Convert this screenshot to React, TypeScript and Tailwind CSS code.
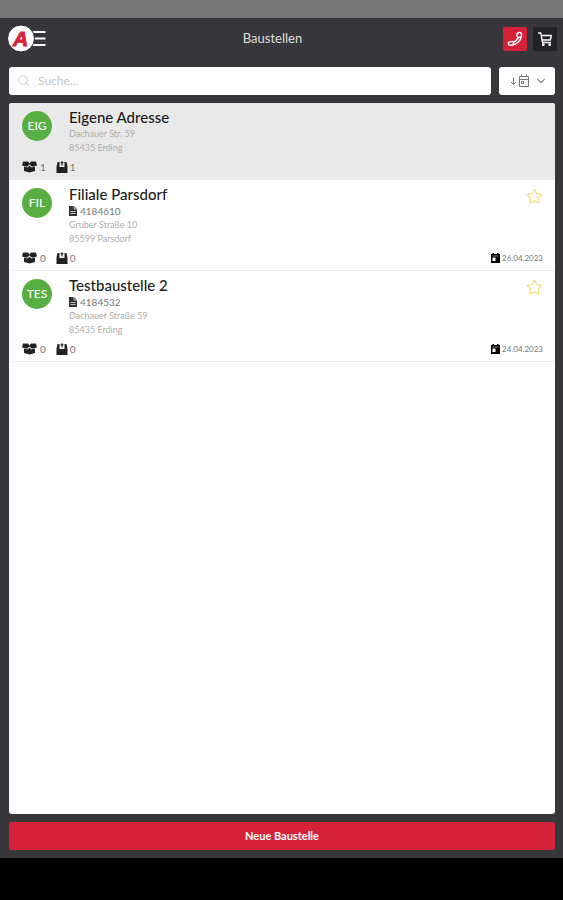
import React from "react";
import {IoChevronDown, IoSearchOutline} from "react-icons/io5";
import {Star} from "lucide-react";

type Site = {
    short: string;
    name: string;
    number?: string;
    street: string;
    city: string;
    orders: number;
    deliveries: number;
    date?: string;
};

const sites: Site[] = [
    {short: "EIG", name: "Eigene Adresse", street: "Dachauer Str. 59", city: "85435 Erding", orders: 1, deliveries: 1},
    {short: "FIL", name: "Filiale Parsdorf", number: "4184610", street: "Gruber Straße 10", city: "85599 Parsdorf", orders: 0, deliveries: 0, date: "26.04.2023"},
    {short: "TES", name: "Testbaustelle 2", number: "4184532", street: "Dachauer Straße 59", city: "85435 Erding", orders: 0, deliveries: 0, date: "24.04.2023"},
];

function PhoneIcon() {
    return (
        <svg viewBox="0 0 16 16" className="size-4" fill="none" stroke="currentColor" strokeWidth="1.4" strokeLinejoin="round" strokeLinecap="round" aria-hidden="true">
            <path d="M10.400 2.400Q12.500 0.700 14 2Q14.800 3 14.500 4.800C14 10 9.500 13.800 4 14.300Q2 14.400 1.500 13.200Q1.200 12 2 11.200L5.200 10.300 6.600 11.300C8.800 10.300 10.300 8.600 11.200 6.600L10.100 5.200Q9.600 3.400 10.400 2.400Z"/>
            <path d="M11.200 6.600 14 5.800M6.600 11.300 6.200 13.800"/>
        </svg>
    );
}

function CartIcon() {
    return (
        <svg viewBox="0 0 16 16" className="size-4" fill="none" stroke="currentColor" strokeWidth="1.4" strokeLinejoin="round" strokeLinecap="round" aria-hidden="true">
            <path d="M1.500 2H3.800L5.500 11.500H13.500M4.200 4.500H14.300L13.300 9H5"/>
            <circle cx="6.300" cy="13.700" r="0.700"/>
            <circle cx="12.700" cy="13.700" r="0.700"/>
        </svg>
    );
}

function BoxIcon() {
    return (
        <svg viewBox="0 0 15 12" className="h-3 w-[15px]" fill="currentColor" aria-hidden="true">
            <path d="M1 0.500H6L7.500 2.500 9 0.500H14L15 4.500 10 5.800 7.500 3.500 5 5.800 0 4.500Z"/>
            <path d="M2 5.500 5.500 6.500 7.500 4.700 9.500 6.500 13 5.500V10L7.500 11.500 2 10Z"/>
        </svg>
    );
}

function BasketIcon() {
    return (
        <svg viewBox="0 0 12 12" className="size-3" fill="currentColor" aria-hidden="true">
            <path d="M0.500 5.500 1.500 1H3.500V6H8.500V1H10.500L11.500 5.500V12H0.500Z"/>
            <path d="M6 0 8 2.200H6.600V4.500H5.400V2.200H4Z"/>
        </svg>
    );
}

function FileIcon() {
    return (
        <svg viewBox="0 0 8 10" className="h-[10px] w-2" aria-hidden="true">
            <path d="M0 0H5L8 3V10H0Z" fill="currentColor"/>
            <path d="M5 0V3H8M1.500 5.500H6.500M1.500 7.500H6.500" fill="none" stroke="white" strokeWidth="0.700"/>
        </svg>
    );
}

function DateIcon() {
    return (
        <svg viewBox="0 0 9 10" className="h-[10px] w-[9px]" aria-hidden="true">
            <path d="M0 1H1.500V0H3V1H6V0H7.500V1H9V10H0Z" fill="currentColor"/>
            <path d="M1.500 3H7.500" stroke="white" strokeWidth="0.500"/>
            <path d="M1.500 4.500H4.500V8H1.500Z" fill="white"/>
        </svg>
    );
}

function SortIcon() {
    return (
        <svg viewBox="0 0 20 14" className="h-[14px] w-5" fill="none" stroke="currentColor" aria-hidden="true">
            <path d="M3.500 3.500V10M1 8 3.500 10.500 6 8"/>
            <path d="M9.500 2.500H18.500V12.500H9.500ZM9.500 5.500H18.500M11.500 0.500V3M16.500 0.500V3"/>
            <path d="M11.500 7.500H13.500V9.500H11.500Z"/>
        </svg>
    );
}

function SiteRow({site, active}: {site: Site; active: boolean}) {
    return (
        <li className={`border-b border-[#ededed] pt-1 pr-3 pb-[5px] pl-[13px] ${active ? "bg-[#e9e9e9]" : "bg-white"}`}>
            <div className="flex items-start">
                <div className="mt-1 flex size-[30px] flex-none items-center justify-center rounded-full bg-[#56af40] text-xs font-medium text-white">
                    {site.short}
                </div>
                <div className="ml-[17px] flex-auto">
                    <h2 className="text-[15px] leading-5 font-medium text-[#1c1c1c]">{site.name}</h2>
                    {site.number && (
                        <p className="flex items-center gap-[3px] text-[10px] leading-[14px] text-[#777]">
                            <span className="text-[#333]"><FileIcon/></span>
                            {site.number}
                        </p>
                    )}
                    <p className="text-[9px] leading-[14px] text-[#adadad]">{site.street}</p>
                    <p className="text-[9px] leading-[14px] text-[#adadad]">{site.city}</p>
                </div>
                {!active && (
                    <button type="button" aria-label="Favorit" className="mt-1 text-[#f3dc83]">
                        <Star className="size-[17px]" strokeWidth={1.7}/>
                    </button>
                )}
            </div>
            <div className="mt-[5px] flex h-[14px] items-center text-[10px] text-[#777]">
                <span className="text-[#222]"><BoxIcon/></span>
                <span className="ml-[3px]">{site.orders}</span>
                <span className="ml-[10px] text-[#222]"><BasketIcon/></span>
                <span className="ml-[2px]">{site.deliveries}</span>
                {site.date && (
                    <span className="ml-auto flex items-center gap-[2px] text-[8px] text-[#777]">
                        <span className="text-black"><DateIcon/></span>
                        {site.date}
                    </span>
                )}
            </div>
        </li>
    );
}

export default function App() {
    return (
        <div className="flex min-h-screen flex-col bg-black font-['Lato','Noto_Sans',sans-serif]">
            <div className="h-[18px] bg-[#777]"/>
            <div className="flex flex-auto flex-col bg-[#37363b] pr-2 pb-2 pl-[9px]">
                <header className="-mr-[2px] flex h-[41px] items-center">
                    <button type="button" aria-label="Menü" className="w-10 flex-none">
                        <svg viewBox="2 0 40 30" className="h-[30px] w-10 overflow-visible" aria-hidden="true">
                            <path d="M24 8H38.500M24 14.500H38.500M24 21H38.500" stroke="white" strokeWidth="2.200"/>
                            <circle cx="14" cy="14.500" r="13.500" fill="white" stroke="#222226"/>
                            <text x="13.500" y="22" textAnchor="middle" fill="#d9203a" stroke="#d9203a" strokeWidth="1" fontFamily="Liberation Sans, sans-serif" fontSize="21" fontWeight="700" fontStyle="italic">A</text>
                        </svg>
                    </button>
                    <h1 className="flex-auto pr-[7px] text-center text-[13px] text-[#dedede]">Baustellen</h1>
                    <div className="flex flex-none gap-[6px]">
                        <button type="button" aria-label="Anrufen" className="flex size-6 items-center justify-center rounded-xs bg-[#d62239] text-white">
                            <PhoneIcon/>
                        </button>
                        <button type="button" aria-label="Warenkorb" className="flex size-6 items-center justify-center rounded-xs bg-[#222226] text-white">
                            <CartIcon/>
                        </button>
                    </div>
                </header>
                <div className="mt-2 flex gap-2">
                    <label className="flex h-7 flex-auto items-center rounded-[3px] bg-white px-2">
                        <IoSearchOutline className="size-[14px] flex-none text-[#c4c4c4]"/>
                        <input type="search" aria-label="Suche" placeholder="Suche..." className="ml-[7px] w-full bg-transparent text-xs text-gray-700 outline-none placeholder:text-[#c4c4c4]"/>
                    </label>
                    <label className="relative flex h-7 w-14 flex-none items-center justify-between rounded-[3px] bg-white px-2 text-[#777]">
                        <span className="ml-[3px]"><SortIcon/></span>
                        <IoChevronDown className="size-3"/>
                        <select aria-label="Sortierung" className="absolute inset-0 w-full opacity-0">
                            <option>Datum</option>
                            <option>Name</option>
                        </select>
                    </label>
                </div>
                <ul className="mt-2 flex-auto overflow-hidden rounded-[3px] bg-white">
                    {sites.map((site, index) => (
                        <SiteRow key={site.name} site={site} active={index === 0}/>
                    ))}
                </ul>
                <button type="button" className="mt-2 h-7 rounded-xs bg-[#d62239] text-[11px] font-bold text-white">
                    Neue Baustelle
                </button>
            </div>
            <div className="h-[42px]"/>
        </div>
    );
}
